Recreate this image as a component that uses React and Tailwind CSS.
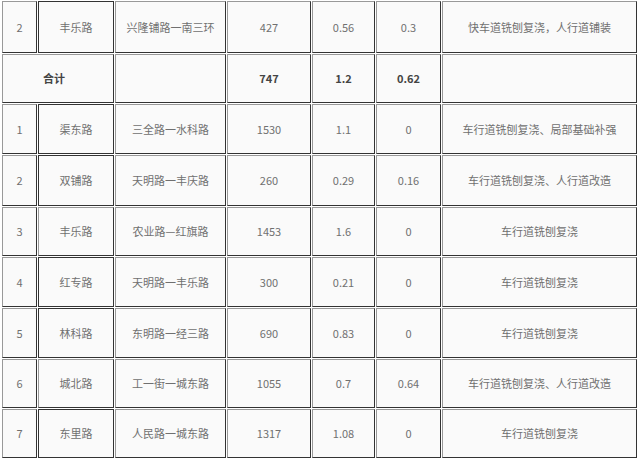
import React from "react";

const rows = [
  { no: "2", name: "丰乐路", range: "兴隆铺路一南三环", len: "427", a: "0.56", b: "0.3", work: "快车道铣刨复浇，人行道铺装", dark: true },
  { total: true, len: "747", a: "1.2", b: "0.62" },
  { no: "1", name: "渠东路", range: "三全路一水科路", len: "1530", a: "1.1", b: "0", work: "车行道铣刨复浇、局部基础补强", dark: true },
  { no: "2", name: "双铺路", range: "天明路一丰庆路", len: "260", a: "0.29", b: "0.16", work: "车行道铣刨复浇、人行道改造", dark: true },
  { no: "3", name: "丰乐路", range: "农业路—红旗路", len: "1453", a: "1.6", b: "0", work: "车行道铣刨复浇" },
  { no: "4", name: "红专路", range: "天明路一丰乐路", len: "300", a: "0.21", b: "0", work: "车行道铣刨复浇", dark: true },
  { no: "5", name: "林科路", range: "东明路一经三路", len: "690", a: "0.83", b: "0", work: "车行道铣刨复浇", dark: true },
  { no: "6", name: "城北路", range: "工一街一城东路", len: "1055", a: "0.7", b: "0.64", work: "车行道铣刨复浇、人行道改造" },
  { no: "7", name: "东里路", range: "人民路一城东路", len: "1317", a: "1.08", b: "0", work: "车行道铣刨复浇", dark: true },
];

function Cell({ children, className = "", dark = false }) {
  return (
    <div
      className={
        "flex items-center justify-center bg-[#fafafa] border border-r-[#333] border-b-[#333] " +
        (dark ? "border-l-[#333] border-t-[#333] " : "border-l-[#999] border-t-[#999] ") +
        className
      }
    >
      {children}
    </div>
  );
}

export default function App() {
  return (
    <div
      className="w-[640px] h-[458px] overflow-hidden bg-white text-[11px] text-[#707070]"
      style={{ fontFamily: '"Noto Sans CJK SC", "Noto Sans", sans-serif' }}
    >
      <div className="ml-[2px] mt-[1px] grid grid-cols-[35px_76px_111px_84px_63px_65px_195px] grid-rows-[52px_49px_50px_51px_49px_50px_50px_49px_49px] gap-px">
        {rows.map((r, i) =>
          r.total ? (
            <React.Fragment key={i}>
              <Cell className="col-span-2 pr-2 font-bold text-[#444]">合计</Cell>
              <Cell />
              <Cell className="font-bold text-[#444]">{r.len}</Cell>
              <Cell className="font-bold text-[#444]">{r.a}</Cell>
              <Cell className="font-bold text-[#444]">{r.b}</Cell>
              <Cell />
            </React.Fragment>
          ) : (
            <React.Fragment key={i}>
              <Cell>{r.no}</Cell>
              <Cell dark={r.dark}>{r.name}</Cell>
              <Cell>{r.range}</Cell>
              <Cell>{r.len}</Cell>
              <Cell>{r.a}</Cell>
              <Cell>{r.b}</Cell>
              <Cell>{r.work}</Cell>
            </React.Fragment>
          )
        )}
      </div>
    </div>
  );
}
